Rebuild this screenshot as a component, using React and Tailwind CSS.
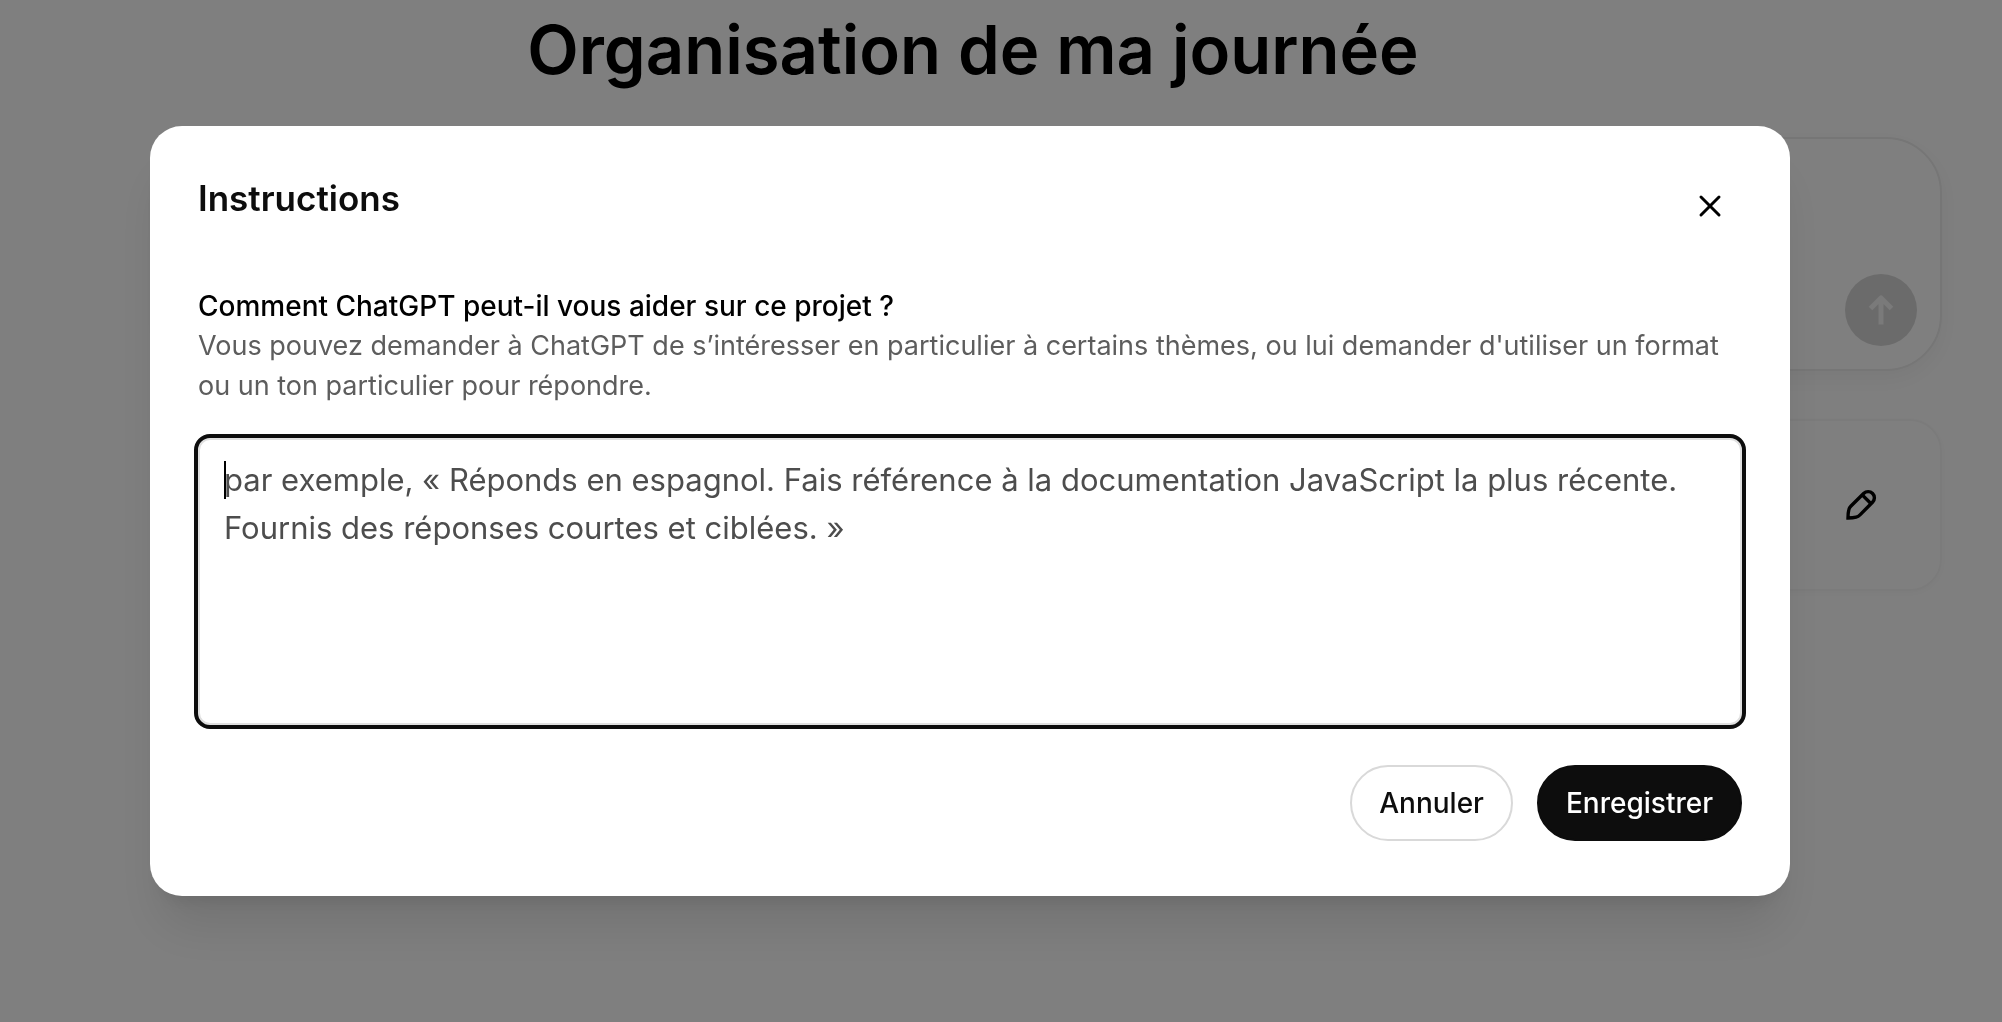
import { X } from "lucide-react";

function Pencil() {
  return (
    <svg viewBox="0 0 32 32" className="size-8" fill="none" stroke="currentColor" strokeWidth="3.4" strokeLinejoin="miter" aria-hidden="true">
      <path d="M3 29 C3 26 3.2 23.2 3.8 20.9 C4.1 19.4 4.8 18.2 6 17 L18.6 4.5 C21.2 2 25.2 2 27.6 4.5 C30 6.9 30 10.8 27.5 13.3 L15 25.9 C13.8 27.1 12.6 27.8 11.1 28.2 C8.8 28.8 6 29 3 29 Z" />
      <path d="M17.2 5.9 L26.1 14.8" />
    </svg>
  );
}

function SendArrow() {
  return (
    <svg viewBox="0 0 36 36" className="size-9" fill="none" stroke="currentColor" strokeWidth="5" aria-hidden="true">
      <path d="M18 32.5 V6 M7.5 16.5 L18 6 L28.5 16.5" strokeLinejoin="round" />
    </svg>
  );
}

function ProjectPage() {
  return (
    <main className="flex flex-col pr-14">
      <h1 className="pt-2 text-center text-[67px] leading-[84px] font-semibold text-black">
        Organisation de ma journée
      </h1>
      <div className="mr-1 ml-40 mt-[45px] flex h-[234px] items-end justify-end rounded-[56px] border-2 border-[#ececec] bg-white p-[23px] shadow-[0_8px_24px_rgba(0,0,0,0.05)]">
        <button type="button" aria-label="Envoyer" className="flex size-18 items-center justify-center rounded-full bg-[#d7d7d7] text-[#f4f4f4]">
          <SendArrow />
        </button>
      </div>
      <div className="mr-1 ml-40 mt-12 flex h-[172px] items-center justify-end rounded-[32px] border-2 border-[#f7f7f7] px-[63px] shadow-[0_2px_8px_rgba(0,0,0,0.03)]">
        <button type="button" aria-label="Modifier les instructions" className="text-black">
          <Pencil />
        </button>
      </div>
    </main>
  );
}

function InstructionsDialog() {
  return (
    <div
      role="dialog"
      aria-modal="true"
      aria-labelledby="dialog-title"
      className="w-full max-w-[1640px] rounded-[32px] bg-white px-12 pt-12 pb-[55px] shadow-[0_40px_50px_-10px_rgba(0,0,0,0.1),0_16px_20px_-12px_rgba(0,0,0,0.1)]"
    >
      <header className="flex items-start justify-between">
        <h2 id="dialog-title" className="text-[35px] leading-[48px] font-semibold text-[#0d0d0d]">
          Instructions
        </h2>
        <button type="button" aria-label="Fermer" className="flex size-16 items-center justify-center text-black">
          <X className="size-9" strokeWidth={2} />
        </button>
      </header>
      <div className="mt-12 leading-10">
        <label htmlFor="instructions" className="block text-[28px] leading-10 font-medium text-black">
          Comment ChatGPT peut-il vous aider sur ce projet ?
        </label>
        <p id="instructions-help" className="text-[27px] leading-10 text-[#5d5d5d]">
          Vous pouvez demander à ChatGPT de s’intéresser en particulier à certains thèmes, ou lui demander d'utiliser un
          format ou un ton particulier pour répondre.
        </p>
      </div>
      <div className="relative mt-8">
        <textarea
          id="instructions"
          aria-describedby="instructions-help"
          placeholder="par exemple, « Réponds en espagnol. Fais référence à la documentation JavaScript la plus récente. Fournis des réponses courtes et ciblées. »"
          className="block h-[287px] w-full resize-none rounded-xl border-2 border-[#e0e0e0] px-6 py-4 text-[31px] leading-[48px] text-[#0d0d0d] caret-transparent outline-4 outline-[#0d0d0d] placeholder:text-[#4d4d4d]"
        />
        <span aria-hidden="true" className="absolute top-[23px] left-[26px] h-[38px] w-0.5 bg-black" />
      </div>
      <footer className="mt-10 flex justify-end gap-6 text-[28px] leading-10 font-medium">
        <button type="button" className="rounded-full border-2 border-[#d9d9d9] bg-white px-[27px] py-4 text-[#0d0d0d]">
          Annuler
        </button>
        <button type="button" className="rounded-full border-2 border-[#0d0d0d] bg-[#0d0d0d] px-[27px] py-4 text-white">
          Enregistrer
        </button>
      </footer>
    </div>
  );
}

export default function App() {
  return (
    <div className="min-h-screen overflow-hidden bg-white font-[Inter,sans-serif]">
      <ProjectPage />
      <div className="fixed inset-0 flex items-center justify-center bg-black/50 pr-[62px]">
        <InstructionsDialog />
      </div>
    </div>
  );
}
